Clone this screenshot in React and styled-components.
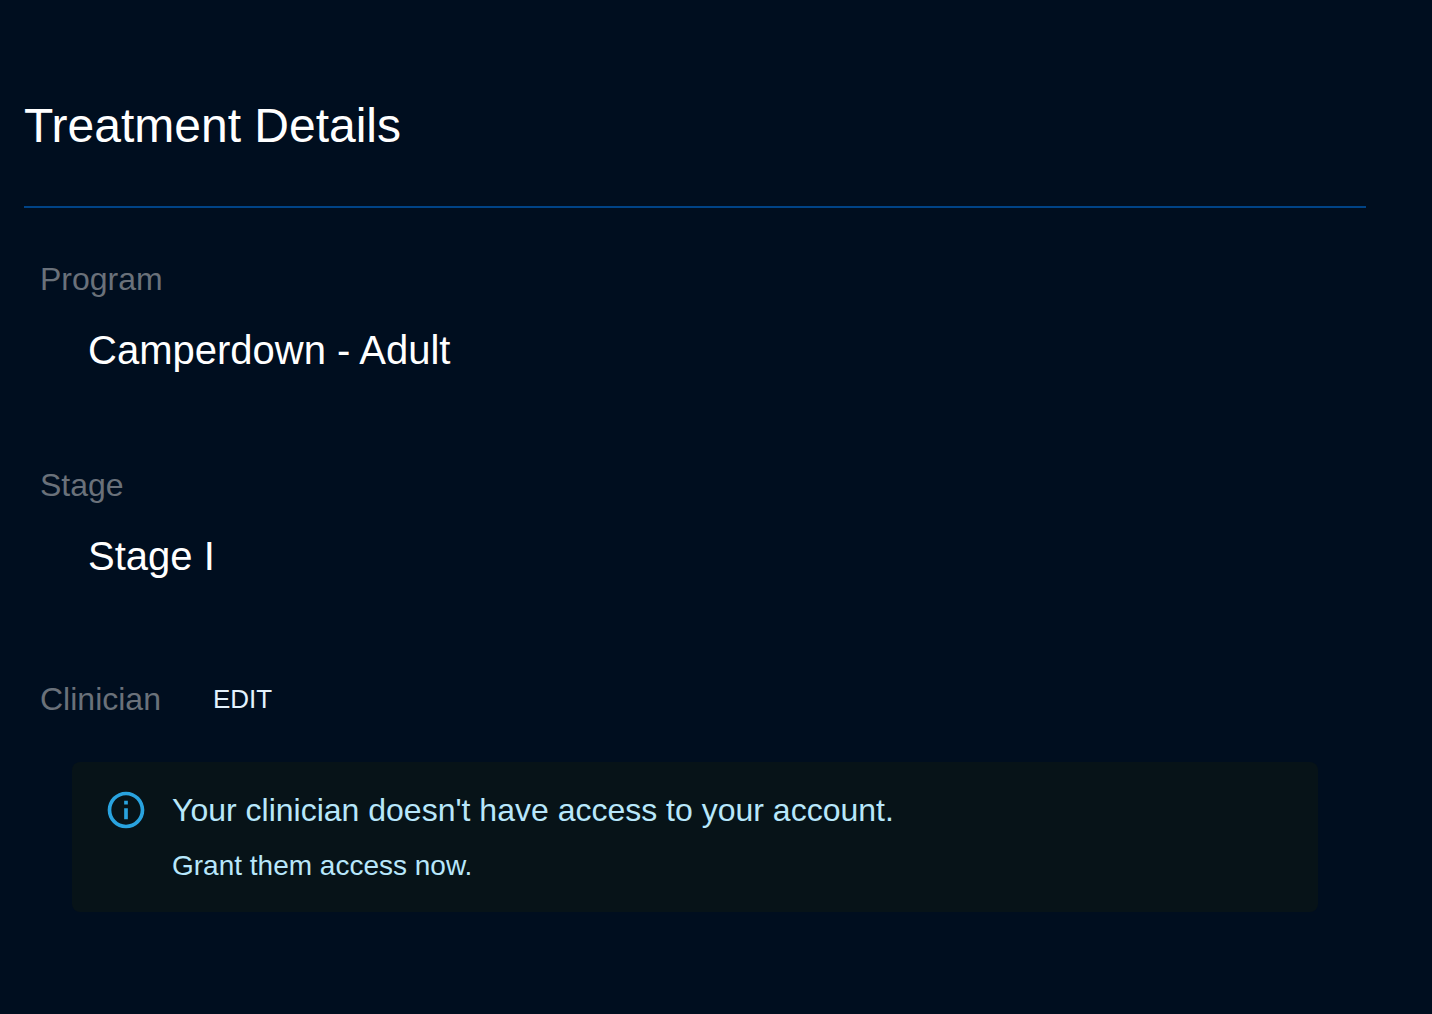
import React from 'react';
import styled, { createGlobalStyle } from 'styled-components';

const GlobalStyle = createGlobalStyle`
  *, *::before, *::after {
    box-sizing: border-box;
  }

  body {
    margin: 0;
    min-height: 100vh;
    background-color: #000e1f;
    color: #fff;
    font-family: 'Liberation Sans', Helvetica, Arial, sans-serif;
  }
`;

const Page = styled.main`
  padding: 96px 66px 96px 24px;
`;

const Title = styled.h1`
  margin: 0;
  padding-bottom: 50px;
  border-bottom: 2px solid #004386;
  font-size: 48px;
  font-weight: 400;
  line-height: 60px;
`;

const DetailList = styled.dl`
  display: flex;
  flex-direction: column;
  gap: 82px;
  margin: 0;
  padding: 48px 48px 0 16px;
`;

const Label = styled.dt`
  color: #6a717a;
  font-size: 32px;
  line-height: 46px;
`;

const Value = styled.dd`
  margin: 0;
  padding: 18px 0 0 48px;
  font-size: 40px;
  line-height: 60px;
`;

const LabelRow = styled.dt`
  display: flex;
  align-items: center;
  gap: 40px;
`;

const EditButton = styled.button`
  padding: 10px 12px;
  border: 0;
  background: none;
  color: #e3f2fd;
  font-family: inherit;
  font-size: 26px;
  line-height: 42px;
  text-transform: uppercase;
  cursor: pointer;
`;

const AlertCell = styled.dd`
  margin: 0;
  padding: 32px 0 0 32px;
`;

const Alert = styled.div`
  display: flex;
  gap: 24px;
  padding: 24px 32px;
  border-radius: 8px;
  background-color: #071318;
  color: #b8e7fb;
`;

const AlertIcon = styled.svg`
  flex: none;
  width: 44px;
  height: 48px;
  fill: #29a3df;
`;

const AlertTitle = styled.p`
  margin: 0;
  font-size: 32px;
  line-height: 48px;
`;

const AlertText = styled.p`
  margin: 10px 0 0;
  font-size: 28px;
  line-height: 44px;
`;

const details = [
  { label: 'Program', value: 'Camperdown - Adult' },
  { label: 'Stage', value: 'Stage I' },
];

const InfoIcon = () => (
  <AlertIcon viewBox="0 0 24 24" aria-hidden="true">
    <path d="M11 7h2v2h-2zm0 4h2v6h-2zm1-9C6.480 2 2 6.480 2 12s4.480 10 10 10 10-4.480 10-10S17.520 2 12 2zm0 18c-4.410 0-8-3.590-8-8s3.590-8 8-8 8 3.590 8 8-3.590 8-8 8z" />
  </AlertIcon>
);

const App = () => (
  <>
    <GlobalStyle />
    <Page>
      <Title>Treatment Details</Title>
      <DetailList>
        {details.map(({ label, value }) => (
          <div key={label}>
            <Label>{label}</Label>
            <Value>{value}</Value>
          </div>
        ))}
        <div>
          <LabelRow>
            <Label as="span">Clinician</Label>
            <EditButton type="button">Edit</EditButton>
          </LabelRow>
          <AlertCell>
            <Alert role="status">
              <InfoIcon />
              <div>
                <AlertTitle>Your clinician doesn't have access to your account.</AlertTitle>
                <AlertText>Grant them access now.</AlertText>
              </div>
            </Alert>
          </AlertCell>
        </div>
      </DetailList>
    </Page>
  </>
);

export default App;
